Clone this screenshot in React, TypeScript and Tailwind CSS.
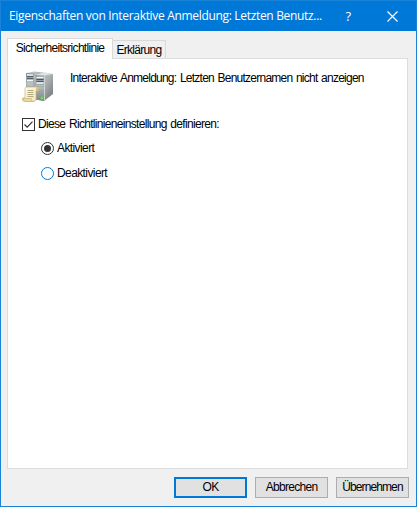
import React from "react";

function ServerIcon() {
  return (
    <svg width="32" height="32" viewBox="0 0 32 32" className="block shrink-0">
      <defs>
        <linearGradient id="side" x1="0" y1="0" x2="1" y2="1">
          <stop offset="0" stopColor="#d3d6d7" />
          <stop offset="0.5" stopColor="#a9aeb0" />
          <stop offset="1" stopColor="#6c7375" />
        </linearGradient>
        <linearGradient id="front" x1="0" y1="0" x2="0" y2="1">
          <stop offset="0" stopColor="#8a9498" />
          <stop offset="0.5" stopColor="#a9b2b5" />
          <stop offset="1" stopColor="#7b8589" />
        </linearGradient>
        <linearGradient id="paper" x1="0" y1="0" x2="1" y2="1">
          <stop offset="0" stopColor="#fffbe6" />
          <stop offset="1" stopColor="#f5e5b3" />
        </linearGradient>
      </defs>
      <path d="M4 2 12 .5l9 1V22l-9 2-8-1z" fill="url(#side)" />
      <path d="M4 2 12 2.500v22l-8-1z" fill="url(#front)" />
      <path d="M5 4h6M5 9.500h6" stroke="#f3f6f7" strokeWidth="1.400" />
      <path d="M5 5.500h6M5 7.500h6" stroke="#56646a" />
      <path d="M5 12h6M5 14h6" stroke="#c8d0d3" />
      <path d="M13.500 4 22 1.500 31 3V23l-9 7-8.500-1.500z" fill="url(#side)" />
      <path d="M13.500 4 22.500 4.500v25.500l-9-1.500z" fill="url(#front)" />
      <path d="M13.500 4 22 1.500 31 3 22.500 4.500z" fill="#dfe4e6" />
      <path d="M14.500 6.500h7M14.500 12h7" stroke="#f5f8f9" strokeWidth="1.500" />
      <path d="M14.500 8.500h7M14.500 10.500h7" stroke="#4a585e" />
      <path d="M14.500 14.500h7M14.500 17h7" stroke="#b8c1c4" />
      <path d="M22.500 4.500V29.500" stroke="#e2e5e6" strokeWidth=".7" />
      <circle cx="20" cy="27" r="1.600" fill="#63e829" />
      <path d="M3 17.500Q3 16 5 16h9.500q2 0 2 2v1.500H14V28q0 2.500-2.500 2.500H3q-2.500 0-2.500-2V27H3z" fill="url(#paper)" stroke="#cfb678" strokeWidth=".7" />
      <path d="M14 19.500v-2q0-1.500 1.300-1.500t1.200 1.500v2z" fill="#dcc17d" />
      <path d="M.8 27.500h8.500q0 3 2 3H3Q.8 30 .8 27.500z" fill="#edd99c" stroke="#c4ac6c" strokeWidth=".6" />
      <path d="M5.500 19.500h6M5.500 21.500h6M5.500 23.500h6M5.500 25.500h6" stroke="#aaa07a" strokeWidth=".9" />
    </svg>
  );
}

function Title() {
  return (
    <header className="flex h-[30px] shrink-0 items-center bg-[#0078d7] text-white">
      <span className="ml-[8px] w-[329px] whitespace-nowrap font-['Open_Sans','Noto_Sans',sans-serif] text-[12px] leading-4 tracking-[-0.32px]">
        Eigenschaften von Interaktive Anmeldung: Letzten Benutz...
      </span>
      <span className="w-[20px] text-center font-['Open_Sans','Noto_Sans',sans-serif] text-[13px] leading-4">?</span>
      <svg width="11" height="11" viewBox="0 0 11 11" className="ml-[29px]">
        <path d="M.5.5l10 10M10.500.5l-10 10" stroke="#fff" strokeWidth="1.200" fill="none" />
      </svg>
    </header>
  );
}

function Radio({ label, checked }: { label: string; checked?: boolean }) {
  return (
    <label className="flex h-[25px] items-center">
      <svg width="13" height="13" viewBox="0 0 13 13" className="block">
        <circle cx="6.500" cy="6.500" r="6" fill="#fff" stroke={checked ? "#333" : "#0078d7"} />
        {checked && <circle cx="6.500" cy="6.500" r="3.500" fill="#333" />}
      </svg>
      <span className="ml-[3px] tracking-[-0.6px]">{label}</span>
    </label>
  );
}

export default function App() {
  return (
    <div className="flex h-[507px] w-[417px] flex-col overflow-hidden border border-[#1883d7] bg-[#f0f0f0] font-['Liberation_Sans',Arial,sans-serif] text-[12px] leading-[13px] tracking-[-0.7px] text-black">
      <Title />
      <main className="mx-[6px] mt-[7px] flex w-[402px] flex-col">
        <div className="flex h-5 items-end">
          <div className="z-10 -mb-px flex h-[21px] w-[106px] shrink-0 justify-center border border-b-0 border-[#d9d9d9] bg-white pt-[3px]">
            Sicherheitsrichtlinie
          </div>
          <div className="flex h-[18px] w-[53px] justify-center border border-b-0 border-l-0 border-[#d9d9d9] pt-[3px]">
            Erklärung
          </div>
        </div>
        <section className="h-[411px] w-[401px] border border-[#dcdcdc] bg-white pl-[14px] pt-[12px]">
          <div className="flex">
            <ServerIcon />
            <span className="ml-4 mt-px whitespace-nowrap tracking-[-0.76px] [word-spacing:1px]">
              Interaktive Anmeldung: Letzten Benutzernamen nicht anzeigen
            </span>
          </div>
          <label className="mt-[15px] flex h-[13px] items-center">
            <svg width="13" height="13" viewBox="0 0 13 13" className="block">
              <rect x=".5" y=".5" width="12" height="12" fill="#fff" stroke="#333" />
              <path d="M2.500 6.500l2.700 2.700 5.300-5.500" fill="none" stroke="#333" strokeWidth="1.200" />
            </svg>
            <span className="ml-[3px] whitespace-nowrap tracking-[-0.68px] [word-spacing:1px]">
              Diese Richtlinieneinstellung definieren:
            </span>
          </label>
          <div className="ml-[19px] mt-[5px]">
            <Radio label="Aktiviert" checked />
            <Radio label="Deaktiviert" />
          </div>
        </section>
        <footer className="mt-2 flex justify-end gap-2">
          <button className="h-[21px] w-[73px] border-2 border-[#0078d7] bg-[#e1e1e1]">OK</button>
          <button className="h-[21px] w-[73px] border border-[#adadad] bg-[#e1e1e1]">Abbrechen</button>
          <button className="h-[21px] w-[73px] border border-[#adadad] bg-[#e1e1e1] tracking-[-0.9px]">Übernehmen</button>
        </footer>
      </main>
    </div>
  );
}
